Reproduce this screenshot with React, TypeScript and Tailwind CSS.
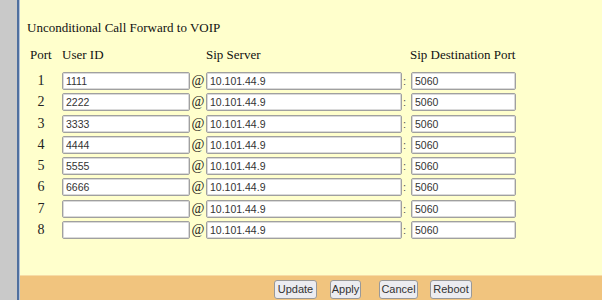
import React from "react";

const rows = [
  { port: 1, user: "1111" },
  { port: 2, user: "2222" },
  { port: 3, user: "3333" },
  { port: 4, user: "4444" },
  { port: 5, user: "5555" },
  { port: 6, user: "6666" },
  { port: 7, user: "" },
  { port: 8, user: "" },
];

const serif = "font-['Liberation_Serif','Times_New_Roman',serif]";
const sans = "font-['Liberation_Sans',Tahoma,sans-serif]";
const inputCls = `h-[18px] border border-[#a0a0a0] rounded-[2px] bg-white px-[3px] text-[10.5px] text-[#333] outline-none shadow-[inset_0_0_0_1px_#dadada] ${sans}`;
const cols = "grid grid-cols-[42px_128px_16px_196px_9px_105px] items-center";

const App = () => {
  return (
    <div className="flex w-[602px] h-[300px] overflow-hidden">
      <div className="w-[17px] bg-[#c9c9c9]" />
      <div className="w-[2px] bg-[#4f6f9f]" />
      <div className="w-[1px] bg-[#b4c3d8]" />
      <div className="flex-1 flex flex-col bg-[#ffffcc]">
        <div className="flex-1">
          <div className={`pt-[20px] pl-[7px] text-[13px] leading-[16px] text-[#111] ${serif}`}>
            Unconditional Call Forward to VOIP
          </div>
          <div className={`${cols} mt-[11px] h-[16px] text-[13px] leading-[16px] text-[#111] ${serif}`}>
            <span className="pl-[10px]">Port</span>
            <span>User ID</span>
            <span />
            <span>Sip Server</span>
            <span />
            <span className="-ml-[1px]">Sip Destination Port</span>
          </div>
          <div className={`${cols} mt-[9px] gap-y-[3.3px]`}>
            {rows.map((r) => (
              <React.Fragment key={r.port}>
                <span className={`text-center text-[14px] leading-[18px] text-[#222] ${serif}`}>
                  {r.port}
                </span>
                <input className={`${inputCls} w-[128px]`} defaultValue={r.user} readOnly />
                <span className={`text-center text-[14px] leading-[18px] text-[#222] ${serif}`}>@</span>
                <input className={`${inputCls} w-[196px]`} defaultValue="10.101.44.9" readOnly />
                <span className={`pl-[1px] text-[11px] leading-[18px] text-[#555] ${sans}`}>:</span>
                <input className={`${inputCls} w-[105px]`} defaultValue="5060" readOnly />
              </React.Fragment>
            ))}
          </div>
        </div>
        <div className={`h-[25px] border-t border-[#f7dca6] bg-[#f1c47e] flex items-start pt-[4px] pl-[254px] text-[11px] text-[#333] ${sans}`}>
          <button className="w-[43px] h-[19px] border border-[#999] rounded-[3px] bg-[#ececf0]">Update</button>
          <button className="ml-[13px] w-[31px] h-[19px] border border-[#999] rounded-[3px] bg-[#ececf0]">Apply</button>
          <button className="ml-[18px] w-[39px] h-[19px] border border-[#999] rounded-[3px] bg-[#ececf0]">Cancel</button>
          <button className="ml-[12px] w-[42px] h-[19px] border border-[#999] rounded-[3px] bg-[#ececf0]">Reboot</button>
        </div>
      </div>
    </div>
  );
};

export default App;
